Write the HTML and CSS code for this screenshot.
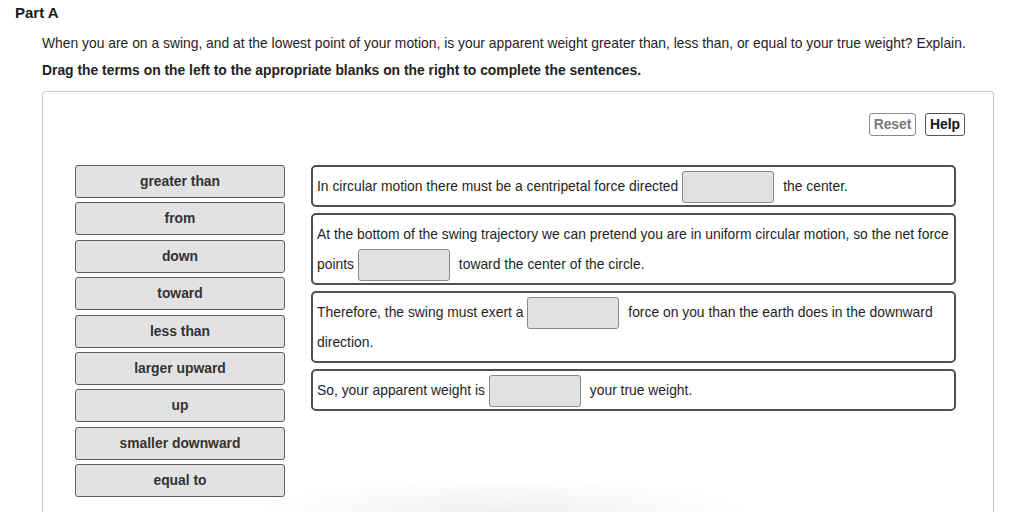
FILE: index.html
```html
<!DOCTYPE html>
<html lang="en">
<head>
<meta charset="utf-8">
<title>Part A</title>
<link rel="stylesheet" href="styles.css">
</head>
<body>
<h2 class="part">Part A</h2>
<p class="question">When you are on a swing, and at the lowest point of your motion, is your apparent weight greater than, less than, or equal to your true weight? Explain.</p>
<p class="instr">Drag the terms on the left to the appropriate blanks on the right to complete the sentences.</p>
<div class="panel">
  <div class="toolbar">
    <button class="btn btn-reset">Reset</button>
    <button class="btn btn-help">Help</button>
  </div>
  <div class="work">
    <div class="terms">
      <div class="term">greater than</div>
      <div class="term">from</div>
      <div class="term">down</div>
      <div class="term">toward</div>
      <div class="term">less than</div>
      <div class="term">larger upward</div>
      <div class="term">up</div>
      <div class="term">smaller downward</div>
      <div class="term">equal to</div>
    </div>
    <div class="sentences">
      <div class="sentence">In circular motion there must be a centripetal force directed<span class="blank"></span> the center.</div>
      <div class="sentence">At the bottom of the swing trajectory we can pretend you are in uniform circular motion, so the net force points<span class="blank"></span> toward the center of the circle.</div>
      <div class="sentence">Therefore, the swing must exert a<span class="blank"></span> force on you than the earth does in the downward direction.</div>
      <div class="sentence">So, your apparent weight is<span class="blank"></span> your true weight.</div>
    </div>
  </div>
</div>
</body>
</html>
```

FILE: styles.css
```css
html, body {
  margin: 0;
  padding: 0;
  height: 515px;
  overflow: hidden;
  background: #fff;
}
body {
  font-family: "Liberation Sans", Arial, sans-serif;
  color: #1e1e1e;
}
.part {
  margin: 0;
  padding: 5px 0 0 15px;
  font-size: 15px;
  line-height: 16px;
  font-weight: bold;
  color: #1a1a1a;
}
.question {
  margin: 14px 0 0 42px;
  font-size: 13.86px;
  line-height: 16px;
}
.instr {
  margin: 11px 0 0 42px;
  font-size: 13.86px;
  line-height: 16px;
  font-weight: bold;
  color: #222;
}
.panel {
  margin: 13px 0 0 42px;
  width: 950px;
  height: 420px;
  border: 1px solid #c9c9c9;
  border-bottom: none;
  border-radius: 4px 4px 0 0;
  background: radial-gradient(ellipse 260px 36px at 460px 100%, #f0f0f0, rgba(255,255,255,0) 100%);
}
.toolbar {
  display: flex;
  justify-content: flex-end;
  gap: 9px;
  padding: 21px 28px 0 0;
}
.btn {
  font-family: "Liberation Sans", Arial, sans-serif;
  font-size: 13.86px;
  font-weight: bold;
  height: 23px;
  padding: 0;
  background: #fff;
  border-radius: 3px;
  line-height: 21px;
}
.btn-reset {
  border: 1px solid #8c8c8c;
  color: #7a7a7a;
  width: 47px;
}
.btn-help {
  border: 1px solid #555;
  color: #111;
  width: 40px;
}
.work {
  display: flex;
  gap: 26px;
  padding: 29px 0 0 32px;
}
.terms {
  display: flex;
  flex-direction: column;
  gap: 4.4px;
  width: 210px;
}
.term {
  box-sizing: border-box;
  height: 33px;
  background: #e2e2e2;
  border: 1.5px solid #5a5e63;
  border-radius: 3px;
  font-size: 13.86px;
  font-weight: bold;
  color: #333;
  text-align: center;
  line-height: 30px;
}
.sentences {
  display: flex;
  flex-direction: column;
  gap: 6px;
  width: 645px;
}
.sentence {
  box-sizing: border-box;
  border: 2px solid #4b5157;
  border-radius: 5px;
  padding: 4px 2px 4px 4px;
  font-size: 13.86px;
  line-height: 30px;
  color: #1e1e1e;
}
.blank {
  display: inline-block;
  box-sizing: border-box;
  width: 92px;
  height: 32px;
  vertical-align: middle;
  margin: -3px 5px -3px 4px;
  background: #e1e1e1;
  border: 1px solid #8a8a8a;
  border-radius: 3px;
}
```
